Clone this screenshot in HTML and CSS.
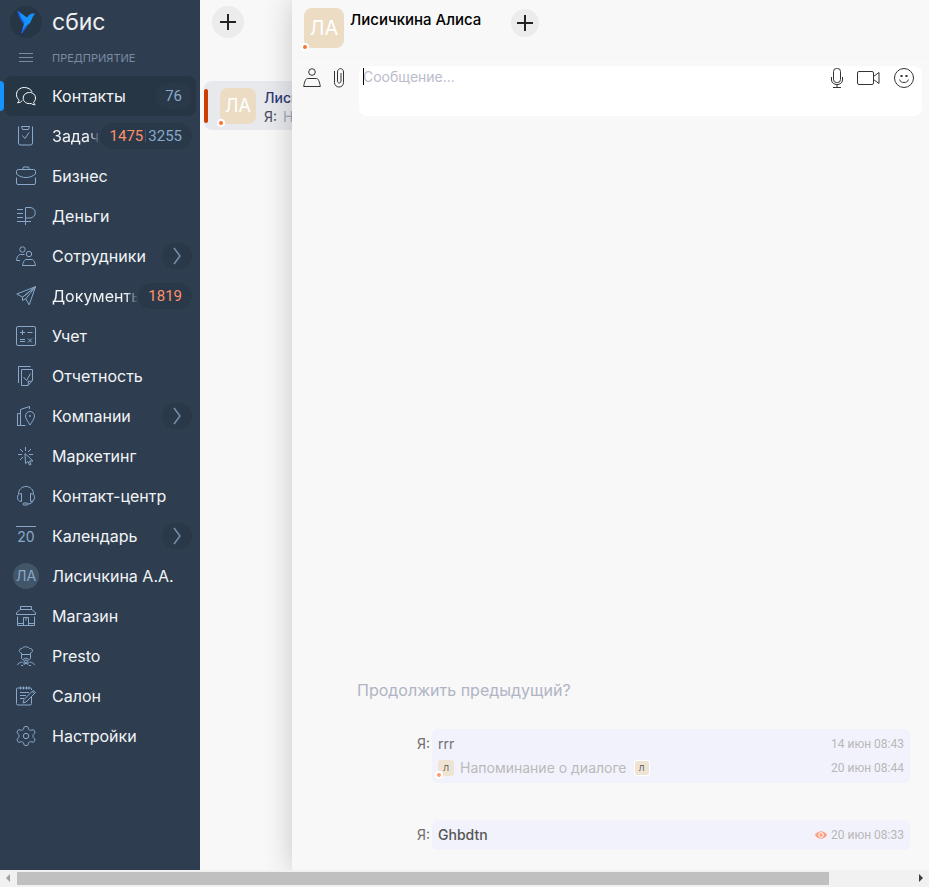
FILE: index.html
```html
<!DOCTYPE html>
<html lang="ru">
<head>
<meta charset="utf-8">
<title>Контакты</title>
<link rel="stylesheet" href="styles.css">
</head>
<body>
<div class="app">
  <nav class="sidebar" aria-label="Главное меню">
    <a class="brand" href="#">
      <span class="brand-mark">
        <svg width="20" height="26" viewBox="0 0 20 26"><path d="M2 2l9 6.500 2-2.500 3-1.500h3l-2 3-3 6.500-3.500 3L5.500 24l2.500-9.500L4.500 9z" fill="#1494ff"/><path d="M2 2l2.500 7 3.500 5.500M10.500 17L5.500 24" stroke="#1b5cf0" stroke-width="1.500"/></svg>
      </span>
      <span class="brand-name">сбис</span>
    </a>
    <button class="section" type="button">
      <span class="icon"><svg width="16" height="20" viewBox="0 0 16 20"><path d="M1 5.500h14M1 9.500h14M1 13.500h14"/></svg></span>
      <span>ПРЕДПРИЯТИЕ</span>
    </button>
    <ul class="menu">
      <li><a class="item active" href="#">
        <span class="icon"><svg viewBox="0 0 20 20"><path d="M6.200 14.500c-.7 1.200-2 2.200-4.700 2.300 1.200-1 1.600-2 1.400-3C1.300 12.500.5 10.600.5 8.500c0-4 3.400-7 7.700-7 3.800 0 6.600 1.700 7.800 4.300"/><path d="M13.500 6.500c3.500 0 6 2.300 6 5.500 0 1.700-.7 3.100-1.800 4.100 0 1 .5 1.800 1.500 2.600-1.900.1-3.200-.4-4-1.200-4.700.7-8-1.700-8-5.400 0-3.200 2.600-5.600 6.300-5.600z"/></svg></span>
        <span class="label">Контакты</span><span class="badge">76</span></a></li>
      <li><a class="item" href="#">
        <span class="icon"><svg viewBox="0 0 20 20"><path d="M2.500.5v16.500a2 2 0 0 0 2 2h10a2 2 0 0 0 2-2V.5M5.500.5h8M5.500.5l1 3h6l1-3M6.500 9.500l2.500 3 4-6"/></svg></span>
        <span class="label fade">Задачи</span><span class="badge"><b class="hot">1475</b><i class="bar"></i>3255</span></a></li>
      <li><a class="item" href="#">
        <span class="icon"><svg viewBox="0 0 20 20"><path d="M6.500 3.500l1-2.500h5l1 2.500M2.500 3.500h15a2 2 0 0 1 2 2V8c-3 2.500-6 3.500-9.500 3.500S3.500 10.500.500 8V5.500a2 2 0 0 1 2-2zM.5 11.500V17a1.500 1.500 0 0 0 1.500 1.500h16a1.500 1.500 0 0 0 1.500-1.500v-5.500"/></svg></span>
        <span class="label">Бизнес</span></a></li>
      <li><a class="item" href="#">
        <span class="icon"><svg viewBox="0 0 20 20"><path d="M9.500 19V1.500h4.500a5 5 0 0 1 0 10.500H9.500M1 3.500h6M1 7.500h6M1 11.500h6M1 15.500h14"/></svg></span>
        <span class="label">Деньги</span></a></li>
      <li><a class="item" href="#">
        <span class="icon"><svg viewBox="0 0 20 20"><circle cx="6.500" cy="3.500" r="2.700"/><circle cx="13" cy="8" r="2.700"/><path d="M8.500 8.500H4.500C2.500 8.500.8 11 .5 14.500H4M9.500 13.500h7c1.500 1 2.600 3 3 6h-13c.4-3 1.500-5 3-6z"/></svg></span>
        <span class="label">Сотрудники</span><span class="more"><svg viewBox="0 0 10 18"><path d="M2 1l6 8-6 8"/></svg></span></a></li>
      <li><a class="item" href="#">
        <span class="icon"><svg viewBox="0 0 20 20"><path d="M19.500.7L.8 8l5.700 3.200zM19.500.7L6.500 11.200v3.300l3.300-1.800M19.500.7l-6.300 18.200-3.400-6.200z"/></svg></span>
        <span class="label fade">Документы</span><span class="badge"><b class="hot">1819</b></span></a></li>
      <li><a class="item" href="#">
        <span class="icon"><svg viewBox="0 0 20 20"><rect x=".5" y=".5" width="19" height="19" rx="1.500"/><path d="M4 6.500h5M6.500 4v5M11.500 6.500h5M4 13.500h5M4 15.500h5M12 12.500l4 4M16 12.500l-4 4"/></svg></span>
        <span class="label">Учет</span></a></li>
      <li><a class="item" href="#">
        <span class="icon"><svg viewBox="0 0 20 20"><path d="M2.500 17V.5h12M5.500 3.500h11v11l-4.500 5H5.500zM12 19.500c.5-2 .5-3 0-4.500 1.500.5 3 .5 4.500-.5M7.500 11l3 3.500 4-7"/></svg></span>
        <span class="label">Отчетность</span></a></li>
      <li><a class="item" href="#">
        <span class="icon"><svg viewBox="0 0 20 20"><path d="M1.500 19.500v-12h3M9.500 19.500h-5v-16l9-3v2.500M1 19.500h3.500M14 19c-2.500-4-4.500-6.500-4.500-9a4.500 4.500 0 0 1 9 0c0 2.500-2 5-4.500 9z"/><circle cx="14" cy="10" r=".6"/></svg></span>
        <span class="label">Компании</span><span class="more"><svg viewBox="0 0 10 18"><path d="M2 1l6 8-6 8"/></svg></span></a></li>
      <li><a class="item" href="#">
        <span class="icon"><svg viewBox="0 0 20 20"><path d="M9.500 1v4M2 8.500h4M13 8.500h4M4 3l3 3M15 3l-3 3M4 14l3-3M9 7.500l8 7.500h-3.500l1.500 3.500-1.500.5-1.500-3.500-2.500 2z"/></svg></span>
        <span class="label">Маркетинг</span></a></li>
      <li><a class="item" href="#">
        <span class="icon"><svg viewBox="0 0 20 20"><path d="M2.500 8C2.500 4 5.500.5 10 .5S17.500 4 17.500 8M5.500 7.500c-2.500 0-4 1.500-4 4s1.500 4 4 4zM14.500 7.500c2.500 0 4 1.500 4 4s-1.500 4-4 4zM17 14.500c-.5 2-2 3.500-5 3.500"/><rect x="7" y="17" width="5" height="2" rx="1"/></svg></span>
        <span class="label">Контакт-центр</span></a></li>
      <li><a class="item" href="#">
        <span class="icon"><span class="day">20</span></span>
        <span class="label">Календарь</span><span class="more"><svg viewBox="0 0 10 18"><path d="M2 1l6 8-6 8"/></svg></span></a></li>
      <li><a class="item" href="#">
        <span class="icon"><span class="me">ЛА</span></span>
        <span class="label">Лисичкина А.А.</span></a></li>
      <li><a class="item" href="#">
        <span class="icon"><svg viewBox="0 0 20 20"><path d="M4.500 3.500v-3h11v3M4 3.500h12l3.500 3.500v1.500H.5V7zM1.500 10.500v9h17v-9M7.500 19.500v-8h5v8M1.500 17.500h6M12.500 17.500h6M10 11.500v3"/></svg></span>
        <span class="label">Магазин</span></a></li>
      <li><a class="item" href="#">
        <span class="icon"><svg viewBox="0 0 20 20"><path d="M5.500 8.500V7c-3-.5-3-4.500.5-4.500C7 .5 12 .0 13.500 2.500c3.500-.5 4 4 1 4.500v1.500zM5.500 8.500v4c1.500 2.500 7.500 2.500 9 0v-4M7.500 13c1.500-1 3.500-1 5 0M8 15.500l2 1.500 2-1.500v3l-2-1.500-2 1.500zM1.500 19c.5-2 2.500-2.500 5-3M18.500 19c-.5-2-2.500-2.500-5-3M5 19.500h2M13 19.500h2"/></svg></span>
        <span class="label">Presto</span></a></li>
      <li><a class="item" href="#">
        <span class="icon"><svg viewBox="0 0 20 20"><path d="M15.500 4V3a1 1 0 0 0-1-1h-13a1 1 0 0 0-1 1v14.500a1.500 1.500 0 0 0 1.500 1.500h12a1.500 1.500 0 0 0 1.500-1.500V11M4.500.5v3M7.500.5v3M10.500.5v3M13 .5v3M4 6.500h9M4 9.500h6M4 12.500h4M7 17l1-3.500L17 4.500l2.500 2L10 16zM16 5.500l2.500 2"/></svg></span>
        <span class="label">Салон</span></a></li>
      <li><a class="item" href="#">
        <span class="icon"><svg viewBox="0 0 20 20"><path d="M8 1.200c.5-1 3.500-1 4 0l.5 2c.8 1 1.700 1.300 2.700 1l1.800-.5c1 0 2.300 2.500 1.800 3.300l-1.500 1.500c-.5 1-.5 2 0 3l1.500 1.500c.5.800-.8 3.300-1.800 3.300l-1.800-.5c-1-.3-1.900 0-2.700 1l-.5 2c-.5 1-3.500 1-4 0l-.5-2c-.8-1-1.700-1.300-2.700-1l-1.800.5c-1 0-2.300-2.500-1.800-3.300l1.500-1.500c.5-1 .5-2 0-3L1.200 7C.7 6.200 2 3.700 3 3.700l1.800.5c1 .3 1.900 0 2.700-1z"/><circle cx="10" cy="10" r="2.700"/></svg></span>
        <span class="label">Настройки</span></a></li>
    </ul>
  </nav>

  <section class="list" aria-label="Диалоги">
    <button class="round" type="button" aria-label="Новый диалог"><svg width="16" height="16" viewBox="0 0 16 16"><path d="M8 0v16M0 8h16"/></svg></button>
    <a class="chat" href="#">
      <span class="avatar small">ЛА</span>
      <span class="chat-text"><span class="chat-name">Лисичкина Алиса</span><span class="chat-last"><span class="chat-who">Я:</span> Напоминание о диалоге</span></span>
    </a>
  </section>

  <main class="panel">
    <header class="head">
      <span class="avatar">ЛА</span>
      <h1 class="title">Лисичкина Алиса</h1>
      <button class="round add" type="button" aria-label="Добавить участника"><svg width="16" height="16" viewBox="0 0 16 16"><path d="M8 0v16M0 8h16"/></svg></button>
    </header>
    <form class="compose">
      <button class="tool" type="button" aria-label="Адресат"><svg width="18" height="20" viewBox="0 0 18 20"><circle cx="9" cy="4" r="3.300"/><path d="M4.500 10.500h9c1.800 0 3 3 3.800 8H.7c.8-5 2-8 3.800-8z"/></svg></button>
      <button class="tool clip" type="button" aria-label="Прикрепить файл"><svg width="12" height="20" viewBox="0 0 12 20"><path d="M1.500 3v11.500c0 6 9 6 9 0V4c0-4.500-6-4.500-6 0v9c0 2.600 3.500 2.600 3.500 0V5"/></svg></button>
      <div class="field">
        <textarea class="message" aria-label="Сообщение" placeholder="Сообщение..."></textarea>
        <div class="actions">
          <button class="tool" type="button" aria-label="Аудио"><svg width="12" height="20" viewBox="0 0 12 20"><rect x="2.500" y=".5" width="7" height="14" rx="3"/><path d="M.5 9v3c0 6 11 6 11 0V9M6 16.500v3M2 19.500h8" /></svg></button>
          <button class="tool" type="button" aria-label="Видео"><svg width="23" height="20" viewBox="0 0 23 20"><rect x=".5" y="3.500" width="16" height="13" rx="1.500"/><path d="M16.500 8.500l5.500-4v11l-5.500-4"/></svg></button>
          <button class="tool" type="button" aria-label="Эмодзи"><svg width="20" height="20" viewBox="0 0 20 20"><circle cx="10" cy="10" r="9.500"/><path d="M5.500 11.500c1 4 8 4 9 0"/><path class="eyes" d="M7.500 7v2M12.500 7v2"/></svg></button>
        </div>
      </div>
    </form>
    <div class="thread">
      <button class="continue" type="button">Продолжить предыдущий?</button>
      <article class="row">
        <span class="who">Я:</span>
        <div class="bubble">
          <p class="line"><span>rrr</span><time>14 июн 08:43</time></p>
          <p class="line"><span class="note"><span class="avatar tiny">Л</span>Напоминание о диалоге<span class="mini">Л</span></span><time>20 июн 08:44</time></p>
        </div>
      </article>
      <article class="row">
        <span class="who">Я:</span>
        <div class="bubble">
          <p class="line"><span class="strong">Ghbdtn</span><time><svg width="12" height="8" viewBox="0 0 12 8"><path d="M0 4c3-5 9-5 12 0-3 5-9 5-12 0z" fill="#f9a081"/><circle cx="6" cy="4" r="2.300" fill="none" stroke="#fff" stroke-width="1"/></svg>20 июн 08:33</time></p>
        </div>
      </article>
    </div>
  </main>

  <div class="scroll">
    <svg width="17" height="17" viewBox="0 0 17 17"><path d="M10 4v8L6 8z" fill="#a0a0a0"/></svg>
    <span class="track"><span class="thumb"></span></span>
    <svg width="17" height="17" viewBox="0 0 17 17"><path d="M7 4v8l4-4z" fill="#404040"/></svg>
  </div>
</div>
</body>
</html>
```
FILE: styles.css
```css
*, *::before, *::after { box-sizing: border-box; }

body {
  margin: 0;
  font-family: Inter, Roboto, sans-serif;
  font-size: 14px;
  line-height: 20px;
  background: #f8f8f8;
  color: #333;
}

button {
  border: 0;
  padding: 0;
  background: none;
  font: inherit;
  color: inherit;
}

a { color: inherit; text-decoration: none; }
svg { display: block; flex: none; fill: none; stroke-width: 1; }

.app {
  display: grid;
  grid-template-columns: 200px 92px minmax(0, 1fr);
  grid-template-rows: 1fr 17px;
  min-height: 100vh;
}

/* Sidebar */
.sidebar { background: #2e3e50; color: #f2f4f6; }
.brand { display: flex; align-items: center; height: 44px; padding-left: 10px; gap: 10px; }
.brand-mark { display: grid; place-items: center; width: 32px; height: 32px; border-radius: 50%; background: #273645; }
.brand-name { font-size: 23px; line-height: 24px; color: #f0f0f0; }
.section { display: flex; align-items: center; height: 28px; margin-bottom: 4px; font-size: 11px; color: #7c8aa3; }
.icon { display: flex; justify-content: center; flex: none; width: 52px; }
.section svg, .item svg { stroke: #88a9cb; }
.section svg { stroke: #7c8aa3; }
.menu { list-style: none; margin: 0; padding: 0; }
.item { position: relative; display: flex; align-items: center; height: 40px; padding-right: 8px; font-size: 16px; }
.item .icon > svg { width: 20px; height: 20px; }
.active { background: #273645; border-radius: 8px; margin: 0 4px; padding-right: 4px; }
.active .icon { width: 44px; }
.active .label { padding-left: 4px; }
.item.active svg { stroke: #fff; }
.active::before { content: ""; position: absolute; left: -4px; top: 5px; width: 4px; height: 30px; border-radius: 0 4px 4px 0; background: #1494ff; }
.label { flex: 1; min-width: 0; overflow: hidden; white-space: nowrap; }
.fade { mask-image: linear-gradient(to right, #000 calc(100% - 12px), transparent); }
.badge { display: flex; align-items: center; height: 26px; padding: 0 10px; border-radius: 13px; background: #2a3949; font-family: Roboto, Inter, sans-serif; font-size: 15px; color: #88a9cb; }
.hot { font-weight: 400; color: #ff8f6b; }
.bar { width: 1px; height: 12px; margin: 0 2px; background: #44566a; }
.more { display: grid; place-items: center; width: 30px; height: 26px; border-radius: 13px; background: #2a3949; }
.more svg { width: 10px; height: 18px; stroke: #7590ad; stroke-width: 1.5; }
.day { width: 20px; border-top: 1px solid #88a9cb; color: #88a9cb; font-size: 14px; text-align: center; }
.me { display: grid; place-items: center; width: 26px; height: 26px; border-radius: 50%; background: #42566a; color: #88a9cb; font-size: 14px; }

/* Dialog list */
.list { padding: 6px 0 0 4px; overflow: hidden; background: #f8f8f8; }
.round { display: grid; place-items: center; width: 32px; height: 32px; margin-left: 8px; border-radius: 50%; background: #ececec; }
.round svg { stroke: #222; stroke-width: 2; }
.chat { display: flex; position: relative; height: 49px; margin-top: 43px; padding: 7px 0 0 16px; gap: 8px; border-radius: 8px 0 0 8px; background: #e8e9ed; }
.chat::before { content: ""; position: absolute; left: 0; top: 8px; width: 4px; height: 34px; border-radius: 2px; background: #cc3d00; }
.chat-text { display: flex; flex-direction: column; white-space: nowrap; line-height: 19px; }
.chat-name { font-weight: 500; color: #2f3a75; }
.chat-last { color: #a5a9b8; }
.chat-who { margin-right: 2px; color: #4a4e5c; }

.avatar { position: relative; display: grid; place-items: center; flex: none; width: 40px; height: 40px; border-radius: 8px; background: #ebdcc3; color: #fff; font-size: 20px; }
.avatar::after { content: ""; position: absolute; left: -3px; bottom: -3px; width: 8px; height: 8px; border: 2px solid #fff; border-radius: 50%; background: #ff7033; }
.avatar.small { width: 36px; height: 36px; font-size: 18px; }
.avatar.tiny { width: 16px; height: 16px; border-radius: 3px; background: #efe4d4; color: #555; font-size: 8px; line-height: 16px; }
.avatar.tiny::after { background: #ff9a70; }

/* Conversation */
.panel { display: flex; flex-direction: column; position: relative; background: #f8f8f8; box-shadow: 0 0 28px rgba(0, 0, 0, .2); }
.head { display: flex; align-items: flex-start; height: 58px; padding: 8px 12px; border-bottom: 1px solid #f4f4f4; }
.title { margin: 2px 0 0 6px; font-size: 15px; line-height: 20px; font-weight: 500; color: #000; }
.add { width: 28px; height: 28px; margin: 1px 0 0 30px; }
.compose { display: flex; align-items: flex-start; padding: 8px 7px 0 11px; }
.tool { display: grid; place-items: center; height: 24px; }
.tool svg { stroke: #333; }
.clip { margin: 0 14px 0 12px; }
.field { position: relative; display: flex; flex: 1; height: 50px; border-radius: 8px; background: #fff; }
.field::before { content: ""; position: absolute; left: 4px; top: 2px; width: 1px; height: 17px; background: #000; }
.message { flex: 1; min-width: 0; border: 0; outline: 0; resize: none; padding: 1px 4px; background: transparent; font: inherit; }
.message::placeholder { color: #b9bccb; opacity: 1; }
.actions { display: flex; gap: 14px; padding-right: 8px; }
.eyes { stroke-width: 2; }
.thread { display: flex; flex-direction: column; flex: 1; justify-content: flex-end; padding: 20px 19px 20px 65px; }
.continue { align-self: flex-start; margin-bottom: 29px; font-size: 16px; color: #b0b4c5; }
.row { display: flex; }
.row + .row { margin-top: 37px; }
.who { width: 75px; padding: 5px 2px 0 0; text-align: right; color: #707070; }
.bubble { flex: 1; min-width: 0; padding: 3px 6px; border-radius: 6px; background: #f2f2fc; }
.line { display: flex; justify-content: space-between; align-items: center; height: 24px; margin: 0; color: #707070; }
.strong { font-weight: 500; color: #555; }
.note { display: flex; align-items: center; gap: 6px; color: #bababa; }
.mini { width: 14px; height: 14px; margin-left: 2px; border-radius: 2px; background: #efe4d4; box-shadow: 0 0 0 1px #fff; color: #555; font-size: 8px; line-height: 14px; text-align: center; }
time { display: flex; align-items: center; gap: 4px; font-family: Roboto, Inter, sans-serif; font-size: 12px; color: #b8b8b8; }

/* Horizontal scroll strip */
.scroll { position: relative; grid-column: 1 / -1; display: flex; background: #f1f1f1; }
.track { flex: 1; padding: 2px 0; }
.thumb { display: block; width: 90.7%; height: 13px; background: #c0c0c0; }
```
